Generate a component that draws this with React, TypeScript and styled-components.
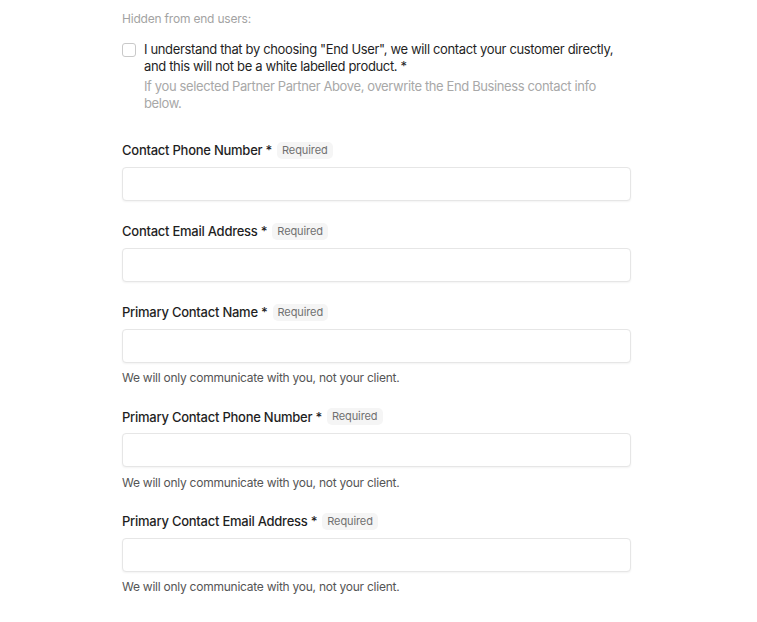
import React from "react";
import styled, { createGlobalStyle } from "styled-components";

const Global = createGlobalStyle`
  html, body { margin: 0; padding: 0; background: #ffffff; }
  body { font-family: Inter, "Noto Sans", "Liberation Sans", sans-serif; -webkit-font-smoothing: antialiased; }
`;

const Page = styled.div`
  padding: 11px 0 30px 122px;
  width: 509px;
`;

const SectionNote = styled.div`
  font-size: 12px;
  line-height: 16px;
  letter-spacing: -0.2px;
  color: #a3a3a3;
`;

const CheckRow = styled.label`
  display: flex;
  gap: 8px;
  margin-top: 14px;
  align-items: flex-start;
`;

const Box = styled.span`
  flex: none;
  width: 12px;
  height: 12px;
  margin-top: 2px;
  border: 1px solid #c9c9c9;
  border-radius: 3px;
  background: #fff;
`;

const CheckText = styled.div`
  font-size: 13px;
  line-height: 17px;
  letter-spacing: -0.35px;
  color: #1f1f1f;
`;

const CheckHint = styled.div`
  margin-top: 3px;
  font-size: 13px;
  line-height: 17px;
  letter-spacing: -0.38px;
  color: #a8a8a8;
`;

const Fields = styled.div`
  display: flex;
  flex-direction: column;
  gap: 20.5px;
  margin-top: 28px;
`;

const Field = styled.div`
  display: flex;
  flex-direction: column;
`;

const LabelRow = styled.div`
  display: flex;
  align-items: center;
  gap: 5px;
  height: 20px;
`;

const LabelText = styled.span`
  font-size: 13px;
  font-weight: 500;
  letter-spacing: -0.25px;
  color: #1f1f1f;
`;

const Badge = styled.span`
  font-size: 11px;
  line-height: 17px;
  letter-spacing: -0.1px;
  padding: 0 5px;
  border-radius: 5px;
  background: #f5f5f5;
  color: #707070;
`;

const Input = styled.input`
  margin-top: 6.5px;
  box-sizing: border-box;
  width: 509px;
  height: 34px;
  border: 1px solid #e6e6e6;
  border-radius: 4px;
  box-shadow: 0 1px 2px rgba(0, 0, 0, 0.05);
  background: #fff;
  outline: none;
  font: inherit;
  font-size: 13px;
  padding: 0 10px;
`;

const Hint = styled.div`
  margin-top: 7.5px;
  font-size: 12px;
  line-height: 16px;
  letter-spacing: -0.25px;
  color: #555555;
`;

const fields = [
  { label: "Contact Phone Number *", hint: false },
  { label: "Contact Email Address *", hint: false },
  { label: "Primary Contact Name *", hint: true },
  { label: "Primary Contact Phone Number *", hint: true },
  { label: "Primary Contact Email Address *", hint: true },
];

export default function App() {
  return (
    <>
      <Global />
      <Page>
        <SectionNote>Hidden from end users:</SectionNote>
        <CheckRow>
          <Box />
          <div>
            <CheckText>
              I understand that by choosing "End User", we will contact your customer directly, and this will not be a white labelled product. *
            </CheckText>
            <CheckHint>
              If you selected Partner Partner Above, overwrite the End Business contact info below.
            </CheckHint>
          </div>
        </CheckRow>
        <Fields>
          {fields.map((f) => (
            <Field key={f.label}>
              <LabelRow>
                <LabelText>{f.label}</LabelText>
                <Badge>Required</Badge>
              </LabelRow>
              <Input type="text" />
              {f.hint && <Hint>We will only communicate with you, not your client.</Hint>}
            </Field>
          ))}
        </Fields>
      </Page>
    </>
  );
}
